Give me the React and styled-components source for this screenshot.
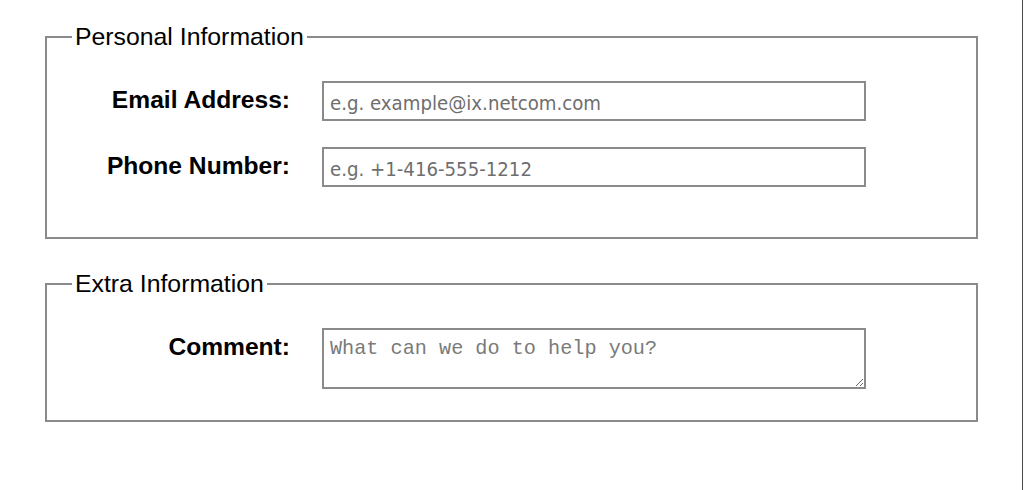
import React from 'react';
import styled, { createGlobalStyle } from 'styled-components';

const GlobalStyle = createGlobalStyle`
  html, body {
    margin: 0;
    padding: 0;
    background: #ffffff;
  }
  body {
    font-family: 'Liberation Sans', Arial, sans-serif;
    color: #000000;
  }
`;

const Page = styled.div`
  box-sizing: border-box;
  width: 1023px;
  min-height: 100vh;
  padding: 23px 0 0 45px;
  border-right: 1px solid #4a4a4a;
`;

const Fieldset = styled.fieldset`
  box-sizing: border-box;
  width: 933px;
  margin: ${({ $mt }) => $mt || 0}px 0 0;
  padding: ${({ $pt }) => $pt}px 0 ${({ $pb }) => $pb}px;
  border: 2px solid #8a8a8a;
  min-inline-size: 0;
`;

const Legend = styled.legend`
  margin-left: 25px;
  padding: 0 3px;
  font-family: 'Liberation Sans', Arial, sans-serif;
  font-size: 24.8px;
  font-weight: 400;
  color: #000000;
`;

const Rows = styled.div`
  display: flex;
  flex-direction: column;
  gap: 26px;
`;

const Row = styled.div`
  display: grid;
  grid-template-columns: 243px 544px;
  column-gap: 32px;
  align-items: start;
`;

const Label = styled.label`
  margin-top: 5px;
  text-align: right;
  font-family: 'Liberation Sans', Arial, sans-serif;
  font-size: 24.6px;
  font-weight: 700;
  color: #000000;
`;

const TextInput = styled.input`
  box-sizing: border-box;
  width: 544px;
  height: 40px;
  margin: 0;
  padding: 3px 6px 0;
  border: 2px solid #8a8a8a;
  border-radius: 0;
  outline: none;
  font-family: 'DejaVu Sans Condensed', 'DejaVu Sans', Verdana, sans-serif;
  font-stretch: semi-condensed;
  font-size: 20.2px;
  color: #222;

  &::placeholder {
    color: #6e6e6e;
  }
`;

const TextArea = styled.textarea`
  box-sizing: border-box;
  display: block;
  width: 544px;
  height: 61px;
  margin: 0;
  padding: 7px 6px;
  border: 2px solid #8a8a8a;
  border-radius: 0;
  outline: none;
  font-family: 'Liberation Mono', 'Courier New', monospace;
  font-size: 20.2px;
  color: #222;

  &::placeholder {
    color: #7a7a7a;
  }
`;

const App = () => {
  return (
    <>
      <GlobalStyle />
      <Page>
        <Fieldset $pt={30} $pb={50}>
          <Legend>Personal Information</Legend>
          <Rows>
            <Row>
              <Label htmlFor="email">Email Address:</Label>
              <TextInput id="email" type="email" placeholder="e.g. example@ix.netcom.com" />
            </Row>
            <Row>
              <Label htmlFor="phone">Phone Number:</Label>
              <TextInput id="phone" type="tel" placeholder="e.g. +1-416-555-1212" />
            </Row>
          </Rows>
        </Fieldset>

        <Fieldset $mt={31} $pt={30} $pb={31}>
          <Legend>Extra Information</Legend>
          <Row>
            <Label htmlFor="comment">Comment:</Label>
            <TextArea id="comment" placeholder="What can we do to help you?" />
          </Row>
        </Fieldset>
      </Page>
    </>
  );
};

export default App;
